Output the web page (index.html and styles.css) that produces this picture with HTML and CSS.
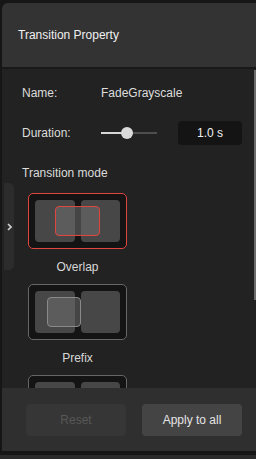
FILE: index.html
```html
<!DOCTYPE html>
<html lang="en">
<head>
    <meta charset="UTF-8">
    <meta name="viewport" content="width=device-width, initial-scale=1.0">
    <title>Transition Property</title>
    <link rel="stylesheet" href="styles.css">
</head>
<body>
    <div class="panel">
        <div class="panel-header">Transition Property</div>

        <div class="panel-body">
            <div class="side-tab">
                <svg width="5" height="8" viewBox="0 0 5 8">
                    <path d="M1 1 L4 4 L1 7" fill="none" stroke="#cfcfcf" stroke-width="1.6"/>
                </svg>
            </div>
            <div class="scrollbar"></div>

            <div class="row">
                <span class="label">Name:</span>
                <span class="value">FadeGrayscale</span>
            </div>

            <div class="row duration">
                <span class="label">Duration:</span>
                <div class="slider">
                    <div class="slider-fill"></div>
                    <div class="slider-thumb"></div>
                </div>
                <div class="time-box">1.0 s</div>
            </div>

            <div class="section-title">Transition mode</div>

            <div class="modes">
                <div class="mode">
                    <div class="mode-card active">
                        <div class="clip"></div>
                        <div class="clip"></div>
                        <div class="overlay overlap"></div>
                    </div>
                    <div class="mode-name">Overlap</div>
                </div>
                <div class="mode">
                    <div class="mode-card">
                        <div class="clip"></div>
                        <div class="clip"></div>
                        <div class="overlay prefix"></div>
                    </div>
                    <div class="mode-name">Prefix</div>
                </div>
                <div class="mode">
                    <div class="mode-card">
                        <div class="clip"></div>
                        <div class="clip"></div>
                    </div>
                </div>
            </div>
        </div>

        <div class="panel-footer">
            <button class="btn" disabled>Reset</button>
            <button class="btn primary">Apply to all</button>
        </div>
    </div>
    <div class="bottom-strip"></div>
</body>
</html>
```

FILE: styles.css
```css
* { margin: 0; padding: 0; box-sizing: border-box; }
body {
    font-family: 'Liberation Sans', Arial, sans-serif;
    font-size: 12px;
    background: #161616;
    color: #dcdcdc;
    width: 256px;
    height: 459px;
    overflow: hidden;
}
.panel {
    margin: 3px 0 0 2px;
    height: 448px;
    display: flex;
    flex-direction: column;
    border-radius: 6px 0 0 0;
    overflow: hidden;
}
.panel-header {
    height: 66px;
    flex-shrink: 0;
    display: flex;
    align-items: center;
    padding-left: 16px;
    background: #333333;
    border-bottom: 2px solid #191919;
    color: #f0f0f0;
}
.panel-body {
    position: relative;
    flex: 1;
    overflow: hidden;
    background: #222222;
    padding: 16px 0 0 20px;
}
.side-tab {
    position: absolute;
    left: 2px;
    top: 114px;
    width: 10px;
    height: 87px;
    background: #2c2c2c;
    border-radius: 0 5px 5px 0;
    display: flex;
    align-items: center;
    justify-content: center;
}
.scrollbar {
    position: absolute;
    right: 0;
    top: 1px;
    width: 2px;
    height: 230px;
    background: #6c6c6c;
}
.row {
    display: flex;
    align-items: center;
    height: 16px;
}
.label {
    width: 79px;
    flex-shrink: 0;
}
.value {
    color: #dedede;
}
.duration {
    margin-top: 20px;
    height: 24px;
}
.slider {
    position: relative;
    width: 56px;
    height: 2px;
    background: #4e4e4e;
}
.slider-fill {
    width: 26px;
    height: 2px;
    background: #d6d6d6;
}
.slider-thumb {
    position: absolute;
    left: 20px;
    top: -5px;
    width: 12px;
    height: 12px;
    border-radius: 50%;
    background: #dadada;
}
.time-box {
    margin-left: 21px;
    width: 64px;
    height: 24px;
    line-height: 24px;
    border-radius: 4px;
    background: #141414;
    color: #f2f2f2;
    text-align: center;
}
.section-title {
    margin-top: 20px;
    height: 16px;
    line-height: 16px;
}
.modes {
    margin: 12px 0 0 6px;
    display: flex;
    flex-direction: column;
    gap: 9px;
    width: 99px;
}
.mode {
    display: flex;
    flex-direction: column;
    align-items: center;
    gap: 10px;
}
.mode-card {
    position: relative;
    width: 99px;
    height: 56px;
    padding: 6px;
    display: flex;
    gap: 6px;
    background: #141414;
    border: 1px solid #666666;
    border-radius: 5px;
}
.mode-card.active {
    border-color: #e0463f;
}
.clip {
    flex: 1;
    background: #474747;
    border-radius: 4px;
}
.overlay {
    position: absolute;
    top: 12px;
    height: 30px;
    border-radius: 4px;
}
.overlay.overlap {
    left: 26px;
    width: 45px;
    border: 1px solid #e0463f;
    background: rgba(110, 110, 110, 0.55);
}
.overlay.prefix {
    left: 18px;
    width: 34px;
    border: 1px solid #8a8a8a;
    background: rgba(110, 110, 110, 0.55);
}
.mode-name {
    height: 16px;
    line-height: 16px;
    color: #d8d8d8;
}
.panel-footer {
    height: 63px;
    flex-shrink: 0;
    display: flex;
    gap: 16px;
    padding: 16px 0 0 24px;
    background: #2f2f2f;
}
.btn {
    width: 100px;
    height: 32px;
    border: none;
    border-radius: 4px;
    font-family: inherit;
    font-size: 12px;
    background: #444444;
    color: #e4e4e4;
    cursor: pointer;
}
.btn:disabled {
    background: #363636;
    color: #575757;
    cursor: default;
}
.bottom-strip {
    margin-top: 4px;
    height: 4px;
    background: #2b2b2b;
}
```
